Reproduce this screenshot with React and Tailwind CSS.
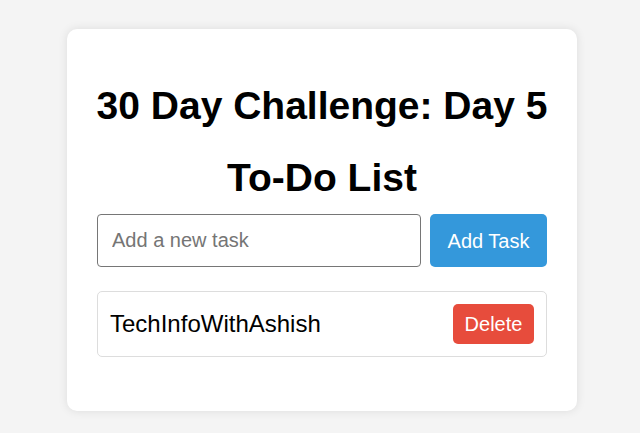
export default function App() {
  return (
    <div className="min-h-[433px] bg-[#f4f4f4] pt-[29px] font-['Liberation_Sans',Arial,sans-serif]">
      <div className="ml-[67px] w-[510px] rounded-[10px] bg-white px-[30px] pt-[56px] pb-[54px] shadow-[0_0_10px_rgba(0,0,0,0.1)]">
        <h1 className="-mx-[20px] whitespace-nowrap text-center text-[39px] font-bold leading-[41px] text-black">
          30 Day Challenge: Day 5
        </h1>
        <h1 className="mt-[31px] text-center text-[39px] font-bold leading-[41px] text-black">
          To-Do List
        </h1>
        <div className="mt-[16px] flex gap-[9px]">
          <input
            type="text"
            placeholder="Add a new task"
            className="h-[53px] flex-1 rounded-[4px] border border-[#767676] px-[14px] text-[20px] text-black outline-none placeholder:text-[#757575]"
          />
          <button className="h-[53px] w-[117px] rounded-[5px] bg-[#3498db] text-[20px] text-white">
            Add Task
          </button>
        </div>
        <ul className="mt-[24px]">
          <li className="flex h-[66px] items-center justify-between rounded-[5px] border border-[#dddddd] pl-[12px] pr-[12px]">
            <span className="text-[24px] text-black">TechInfoWithAshish</span>
            <button className="h-[40px] w-[81px] rounded-[5px] bg-[#e74c3c] text-[20px] text-white">
              Delete
            </button>
          </li>
        </ul>
      </div>
    </div>
  );
}
